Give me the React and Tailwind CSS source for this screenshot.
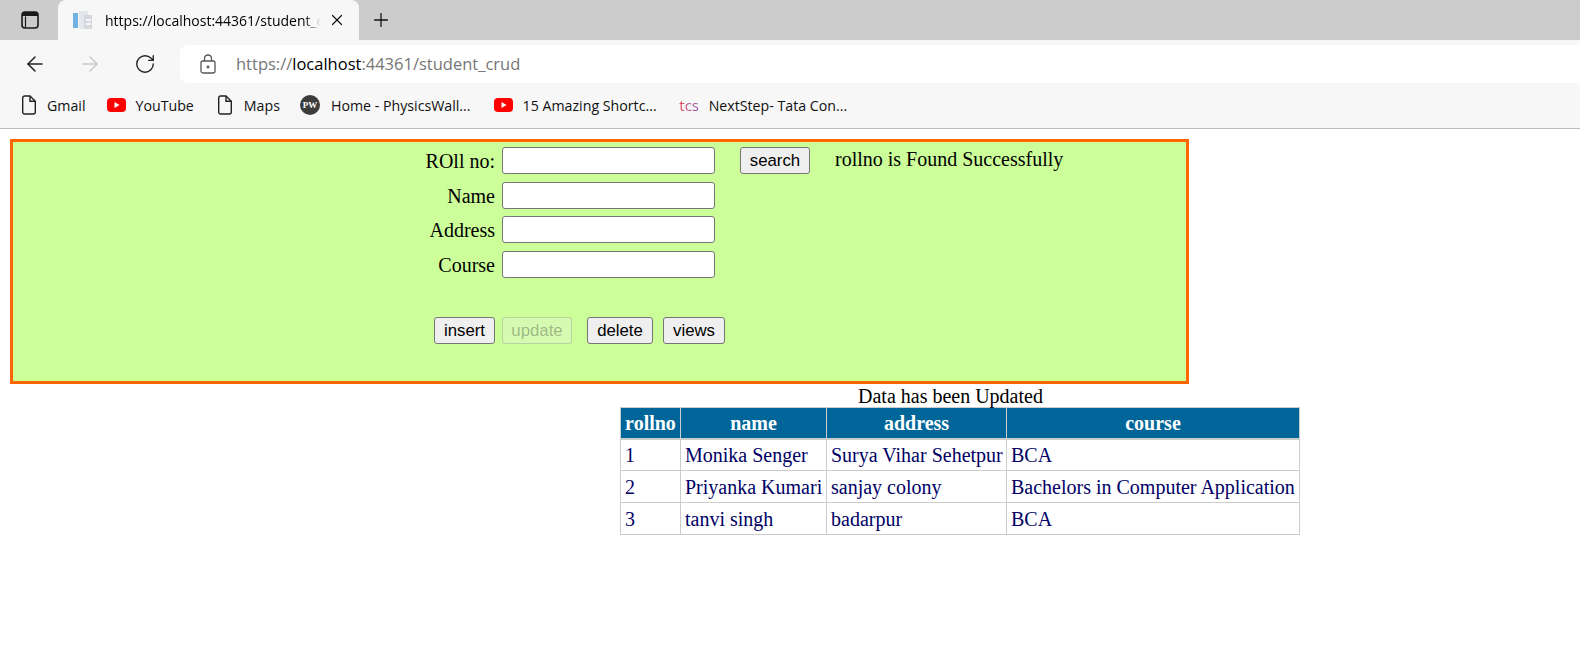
import { ArrowLeft, ArrowRight, Plus, RotateCw, X } from "lucide-react";

const students = [
  { rollno: "1", name: "Monika Senger", address: "Surya Vihar Sehetpur", course: "BCA" },
  { rollno: "2", name: "Priyanka Kumari", address: "sanjay colony", course: "Bachelors in Computer Application" },
  { rollno: "3", name: "tanvi singh", address: "badarpur", course: "BCA" },
];

const FileIcon = () => (
  <svg className="w-[16px] h-[20px] shrink-0" viewBox="0 0 16 20" fill="none" stroke="#222" strokeWidth="1.4">
    <path d="M1.7 3a2 2 0 012-2h5.3l5.3 5.3V17a2 2 0 01-2 2H3.7a2 2 0 01-2-2z" />
    <path d="M9 1v5.3h5.3" />
  </svg>
);

const YoutubeIcon = () => (
  <svg className="w-[19px] h-[14px] shrink-0" viewBox="0 0 19 14">
    <rect width="19" height="14" rx="4" fill="#f00" />
    <path d="M7.5 4l5 3-5 3z" fill="#fff" />
  </svg>
);

function Bookmark({ icon, label, className }) {
  return (
    <div className={`flex items-center ${className}`}>
      {icon}
      <span>{label}</span>
    </div>
  );
}

function BrowserChrome() {
  return (
    <header className="font-['Open_Sans',sans-serif] text-black">
      {/* Tabs */}
      <div className="h-[40px] bg-[#cccccc] flex items-end">
        <div className="w-[58px] h-full flex items-center pl-[21px]">
          <svg className="w-[18px] h-[18px]" viewBox="0 0 18 18" fill="none">
            <rect x="1" y="1" width="16" height="16" rx="3" stroke="#1a1a1a" strokeWidth="1.6" />
            <path d="M1 2.5a1.5 1.5 0 011.5-1.5h13a1.5 1.5 0 011.5 1.5V5H1z" fill="#1a1a1a" />
            <path d="M4.5 5.5v11" stroke="#1a1a1a" strokeWidth="1.2" />
          </svg>
        </div>
        <div className="w-[301px] h-[40px] bg-[#f7f7f7] rounded-t-[8px] flex items-center pl-[15px] text-[14px]">
          <svg className="w-[20px] h-[20px] shrink-0" viewBox="0 0 20 20">
            <rect x="0" y="3" width="5" height="15" fill="#6fb1e0" />
            <rect x="6" y="1" width="9" height="18" fill="#e3e6ea" />
            <rect x="11" y="5" width="8" height="14" fill="#d5d9de" />
            <rect x="13" y="9" width="5" height="2" fill="#f4f5f6" />
            <rect x="13" y="13" width="5" height="2" fill="#f4f5f6" />
          </svg>
          <span className="ml-[12px] w-[216px] whitespace-nowrap [mask-image:linear-gradient(to_right,black_92%,transparent)] overflow-hidden">
            https://localhost:44361/student_crud
          </span>
          <X className="ml-[7px] w-[18px] h-[18px]" strokeWidth={1.6} color="#111" />
        </div>
        <div className="h-full flex items-center ml-[11px]">
          <Plus className="w-[22px] h-[22px]" strokeWidth={1.4} color="#111" />
        </div>
      </div>
      {/* Toolbar */}
      <div className="h-[46px] pt-[2px] bg-[#f7f7f7] flex items-center">
        <ArrowLeft className="ml-[23px] w-[24px] h-[24px]" strokeWidth={1.5} color="#222" />
        <ArrowRight className="ml-[31px] w-[24px] h-[24px]" strokeWidth={1.5} color="#c9c9c9" />
        <RotateCw className="ml-[32px] w-[22px] h-[22px]" strokeWidth={1.5} color="#222" />
        <div className="ml-[24px] flex-1 h-[38px] bg-white rounded-l-[8px] flex items-center pl-[20px] text-[16.5px] text-[#767676]">
          <svg className="w-[16px] h-[20px]" viewBox="0 0 16 20" fill="none" stroke="#555" strokeWidth="1.3">
            <rect x="1" y="7" width="14" height="12" rx="2" />
            <path d="M4.5 7V4.5a3.5 3.5 0 017 0V7" />
            <circle cx="8" cy="13" r="0.8" fill="#555" />
          </svg>
          <span className="ml-[20px]">
            https://<span className="text-black">localhost</span>:44361/student_crud
          </span>
        </div>
      </div>
      {/* Bookmarks */}
      <div className="h-[43px] bg-[#f7f7f7] border-b border-[#bdbdbd] flex items-center pl-[21px] pb-[3px] text-[14.2px] text-[#111]">
        <Bookmark icon={<FileIcon />} label="Gmail" className="gap-[10px]" />
        <Bookmark icon={<YoutubeIcon />} label="YouTube" className="gap-[10px] ml-[21px]" />
        <Bookmark icon={<FileIcon />} label="Maps" className="gap-[11px] ml-[23px]" />
        <Bookmark
          icon={
            <span className="w-[20px] h-[20px] rounded-full bg-[#3c3c3c] text-white text-[9px] font-bold font-['Liberation_Serif',serif] flex items-center justify-center shrink-0">
              PW
            </span>
          }
          label="Home - PhysicsWall..."
          className="gap-[11px] ml-[20px]"
        />
        <Bookmark icon={<YoutubeIcon />} label="15 Amazing Shortc..." className="gap-[10px] ml-[23px]" />
        <Bookmark
          icon={
            <span className="w-[21px] h-[20px] bg-white bg-gradient-to-r from-[#e8434f] to-[#8a4fb5] bg-clip-text text-transparent text-[15px] leading-[20px] text-center shrink-0">
              tcs
            </span>
          }
          label="NextStep- Tata Con..."
          className="gap-[9px] ml-[22px]"
        />
      </div>
    </header>
  );
}

const inputClass = "w-[213px] h-[27px] bg-white border border-[#767676] rounded-[3px]";
const buttonClass =
  "h-[27px] bg-[#efefef] border border-[#767676] rounded-[3px] text-[16.8px] text-black font-['Liberation_Sans',sans-serif] flex items-center justify-center";

function FormRow({ label, className = "", children }) {
  return (
    <div className={`flex items-center h-[27px] ${className}`}>
      <label className="w-[100px] text-right mr-[7px] whitespace-nowrap">{label}</label>
      <input type="text" className={inputClass} />
      {children}
    </div>
  );
}

function StudentForm() {
  return (
    <div className="ml-[10px] mt-[10px] w-[1179px] h-[245px] box-border border-[3px] border-[#ff6600] bg-[#ccff99] pt-[5px] pl-[382px]">
      <FormRow label="ROll no:">
        <button className={`${buttonClass} ml-[25px] w-[70px]`}>search</button>
        <span className="ml-[25px] -mt-[4px]">rollno is Found Successfully</span>
      </FormRow>
      <FormRow label="Name" className="mt-[8px]" />
      <FormRow label="Address" className="mt-[7px]" />
      <FormRow label="Course" className="mt-[8px]" />
      <div className="flex mt-[39px] ml-[39px]">
        <button className={`${buttonClass} w-[61px]`}>insert</button>
        <button
          disabled
          className="ml-[7px] w-[70px] h-[27px] bg-[#efefef]/30 border border-[#767676]/30 rounded-[3px] text-[16.8px] text-[#101010]/30 font-['Liberation_Sans',sans-serif]"
        >
          update
        </button>
        <button className={`${buttonClass} ml-[15px] w-[66px]`}>delete</button>
        <button className={`${buttonClass} ml-[10px] w-[62px]`}>views</button>
      </div>
    </div>
  );
}

function StudentTable() {
  const th = "border border-[#cccccc] border-b-2 bg-[#006699] text-white font-bold px-[4px] h-[31px] leading-[24px]";
  const td = "border border-[#cccccc] px-[4px] h-[32px] leading-[24px] text-[#000066]";
  return (
    <div className="ml-[620px] w-[680px]">
      <div className="h-[23px] leading-[25px] pl-[238px]">Data has been Updated</div>
      <table className="border-collapse table-fixed w-[679px]">
        <colgroup>
          <col className="w-[60px]" />
          <col className="w-[146px]" />
          <col className="w-[180px]" />
          <col className="w-[293px]" />
        </colgroup>
        <thead>
          <tr>
            <th className={th}>rollno</th>
            <th className={th}>name</th>
            <th className={th}>address</th>
            <th className={th}>course</th>
          </tr>
        </thead>
        <tbody>
          {students.map((s) => (
            <tr key={s.rollno}>
              <td className={td}>{s.rollno}</td>
              <td className={`${td} whitespace-nowrap`}>{s.name}</td>
              <td className={`${td} whitespace-nowrap`}>{s.address}</td>
              <td className={`${td} whitespace-nowrap`}>{s.course}</td>
            </tr>
          ))}
        </tbody>
      </table>
    </div>
  );
}

export default function App() {
  return (
    <div className="min-h-[648px] bg-white font-['Liberation_Serif',serif] text-[20px] text-black">
      <BrowserChrome />
      <StudentForm />
      <StudentTable />
    </div>
  );
}
